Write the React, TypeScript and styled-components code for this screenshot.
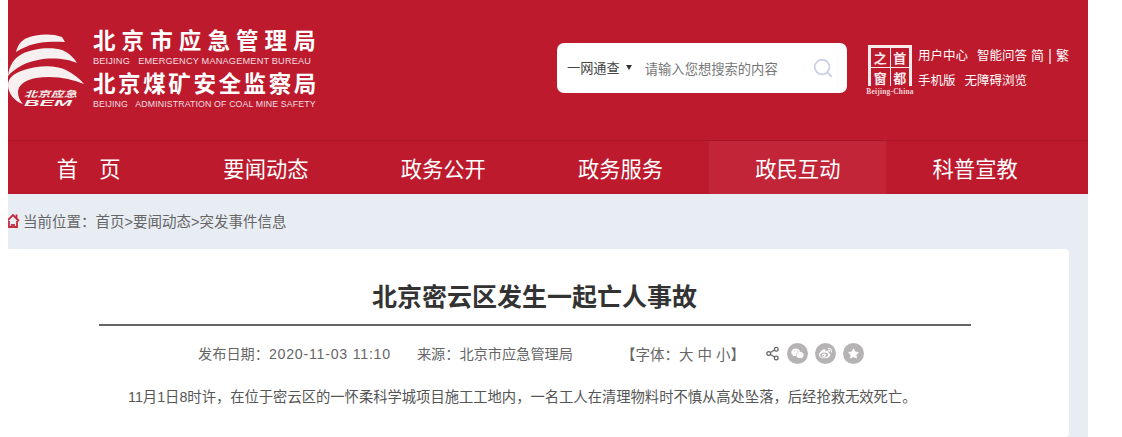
import React from 'react';
import styled, { createGlobalStyle } from 'styled-components';
import { Search, Share2 } from 'lucide-react';
import { FaWeixin, FaWeibo, FaStar } from 'react-icons/fa';

const CJK = `"Liberation Sans", "Noto Sans CJK SC", sans-serif`;

const navItems = ['首　页', '要闻动态', '政务公开', '政务服务', '政民互动', '科普宣教'];
const sealChars = ['之', '首', '窗', '都'];

// drawn in page coordinates, hence the viewBox offset
const Logo = () => (
    <svg width="86" height="88" viewBox="0 28 86 88">
        <path d="M16 52 C18 44 22 40 27 38 C36 34 52 33 62 37 L65 42 C52 41 36 42 28 46 C23 48 19 50 16 52 Z" fill="#f7f0f0"/>
        <path d="M8 76 C9 66 14 58 22 54 C34 48 52 47 62 50 C69 53 74 58 77 63 C68 59 52 57 38 60 C26 62 15 68 8 76 Z" fill="#f7f0f0"/>
        <path d="M8 85 C8 78 14 73 24 70 C36 66 54 64 66 70 C74 74 80 79 84 84 C72 79 54 75 36 78 C24 80 18 86 18 92 C18 97 20 101 23 104 C14 101 8 93 8 85 Z" fill="#f7f0f0"/>
        <LogoMark x="24" y="96.5" textLength="53" lengthAdjust="spacingAndGlyphs">北京应急</LogoMark>
        <LogoMark x="24" y="105.5" textLength="48" lengthAdjust="spacingAndGlyphs">BEM</LogoMark>
    </svg>
);

const HomeIcon = () => (
    <svg width="14" height="15" viewBox="0 0 14 15" fill="none" stroke="#c5283a" strokeWidth="1.8">
        <path d="M1 8 L7 2 L13 8"/>
        <path d="M10.5 5 V1.5"/>
        <path d="M3 8 V14 H6 V11"/>
        <path d="M8 11 V14 H11 V8"/>
    </svg>
);

export default function App() {
    return (
        <>
            <GlobalStyle/>
            <Frame>
                <Page>
                    <Header>
                        <LogoBlock>
                            <Logo/>
                            <LogoText>
                                <LogoTitle $spacing={6.1}>北京市应急管理局</LogoTitle>
                                <LogoEnglish $size={9.2} $spacing={0.18}>BEIJING&nbsp;&nbsp; EMERGENCY MANAGEMENT BUREAU</LogoEnglish>
                                <LogoTitle $spacing={2.6}>北京煤矿安全监察局</LogoTitle>
                                <LogoEnglish $size={8.8} $spacing={0.12}>BEIJING&nbsp;&nbsp; ADMINISTRATION OF COAL MINE SAFETY</LogoEnglish>
                            </LogoText>
                        </LogoBlock>
                        <SearchBox>
                            <ScopeSelect>一网通查</ScopeSelect>
                            <Caret/>
                            <Placeholder>请输入您想搜索的内容</Placeholder>
                            <Search size={22} color="#ccd1e8" strokeWidth={2}/>
                        </SearchBox>
                        <SealBlock>
                            <Seal>
                                {sealChars.map((c) => <SealChar key={c}>{c}</SealChar>)}
                            </Seal>
                            <SealCaption>Beijing-China</SealCaption>
                        </SealBlock>
                        <TopLinks>
                            <LinkRow>
                                <span>用户中心</span>
                                <span>智能问答</span>
                                <LangSwitch>简<Divider/>繁</LangSwitch>
                            </LinkRow>
                            <LinkRow>
                                <span>手机版</span>
                                <span>无障碍浏览</span>
                            </LinkRow>
                        </TopLinks>
                    </Header>
                    <Nav>
                        {navItems.map((item) => (
                            <NavItem key={item} $active={item === '政民互动'}>{item}</NavItem>
                        ))}
                    </Nav>
                    <Main>
                        <Breadcrumb>
                            <HomeIcon/>
                            当前位置：首页&gt;要闻动态&gt;突发事件信息
                        </Breadcrumb>
                        <Card>
                            <Title>北京密云区发生一起亡人事故</Title>
                            <Meta>
                                <span>发布日期：<Digits>2020-11-03 11:10</Digits></span>
                                <Source>来源：北京市应急管理局</Source>
                                <FontSwitch>【字体：大 中 小】</FontSwitch>
                                <ShareGroup>
                                    <Share2 size={15} color="#666"/>
                                    <ShareCircle><FaWeixin size={13}/></ShareCircle>
                                    <ShareCircle><FaWeibo size={13}/></ShareCircle>
                                    <ShareCircle><FaStar size={11}/></ShareCircle>
                                </ShareGroup>
                            </Meta>
                            <Paragraph>11月1日8时许，在位于密云区的一怀柔科学城项目施工工地内，一名工人在清理物料时不慎从高处坠落，后经抢救无效死亡。</Paragraph>
                        </Card>
                    </Main>
                </Page>
            </Frame>
        </>
    );
}

const GlobalStyle = createGlobalStyle`
    html, body {
        margin: 0;
        padding: 0;
        background: #fff;
        font-family: ${CJK};
    }
`;

const Frame = styled.div`
    width: 1080px;
    height: 437px;
    margin-left: 8px;
    overflow: hidden;
`;

const Page = styled.div`
    width: 1088px;
    margin-left: -8px;
`;

const Header = styled.header`
    display: flex;
    height: 140px;
    background: #bd1a2d;
    color: #fff;
`;

const LogoBlock = styled.div`
    display: flex;
    width: 557px;
    padding-top: 27px;
    box-sizing: border-box;
    align-items: flex-start;
    svg {
        flex: none;
        margin-right: 7px;
        margin-top: 1px;
        overflow: visible;
    }
`;

const LogoMark = styled.text`
    font-size: 8.5px;
    font-weight: 700;
    font-style: italic;
    fill: #f7f0f0;
`;

const LogoText = styled.div`
    display: flex;
    flex-direction: column;
    white-space: nowrap;
`;

const LogoTitle = styled.div<{ $spacing: number }>`
    font-size: 22.5px;
    line-height: 29px;
    font-weight: 700;
    letter-spacing: ${(p) => p.$spacing}px;
`;

const LogoEnglish = styled.div<{ $size: number; $spacing: number }>`
    font-size: ${(p) => p.$size}px;
    line-height: 11px;
    letter-spacing: ${(p) => p.$spacing}px;
    color: #f3dfe1;
    margin-bottom: 3px;
`;

const SearchBox = styled.div`
    display: flex;
    align-items: center;
    width: 290px;
    height: 50px;
    margin-top: 43px;
    padding: 0 13px 0 10px;
    box-sizing: border-box;
    background: #fff;
    border-radius: 7px;
`;

const ScopeSelect = styled.span`
    font-size: 13.2px;
    color: #444;
    line-height: 17px;
`;

const Caret = styled.span`
    width: 0;
    height: 0;
    margin: 0 13px 2px 6px;
    border-left: 3px solid transparent;
    border-right: 3px solid transparent;
    border-top: 5px solid #333;
`;

const Placeholder = styled.span`
    flex: 1;
    font-size: 13.3px;
    color: #777;
`;

const SealBlock = styled.div`
    display: flex;
    flex-direction: column;
    align-items: center;
    margin: 45px 0 0 18px;
    width: 50px;
`;

const Seal = styled.div`
    display: grid;
    grid-template-columns: 1fr 1fr;
    grid-template-rows: 1fr 1fr;
    gap: 1px;
    width: 44px;
    height: 41px;
    box-sizing: border-box;
    border: 3px solid #f7eaec;
    background: #f7eaec;
`;

const SealChar = styled.span`
    display: flex;
    align-items: center;
    justify-content: center;
    background: #bd1a2d;
    font-size: 13px;
    font-weight: 700;
    color: #f7eaec;
`;

const SealCaption = styled.span`
    font-family: "Liberation Serif", serif;
    font-size: 7.5px;
    font-weight: 700;
    letter-spacing: 0.2px;
    white-space: nowrap;
    margin-top: 1px;
    color: #f0d5d8;
`;

const TopLinks = styled.div`
    display: flex;
    flex-direction: column;
    gap: 7px;
    margin: 47px 0 0 2px;
    padding-left: 1px;
    font-size: 12.5px;
`;

const LinkRow = styled.div`
    display: flex;
    gap: 9px;
    line-height: 18px;
`;

const LangSwitch = styled.span`
    display: flex;
    align-items: center;
    margin-left: -5px;
    font-size: 13px;
`;

const Divider = styled.i`
    width: 2px;
    height: 15px;
    margin: 0 5px;
    background: #e3a3ab;
`;

const Nav = styled.nav`
    display: grid;
    grid-template-columns: repeat(6, 177.3px);
    height: 53px;
    border-top: 1px solid #a81728;
    background: #bd1a2d;
`;

const NavItem = styled.a<{ $active?: boolean }>`
    display: flex;
    align-items: center;
    justify-content: center;
    font-size: 21.3px;
    color: #fff;
    background: ${(p) => (p.$active ? '#c32538' : 'transparent')};
`;

const Main = styled.main`
    height: 243px;
    background: #e8edf4;
`;

const Breadcrumb = styled.div`
    display: flex;
    align-items: center;
    gap: 3px;
    height: 53px;
    padding: 0 0 2px 6px;
    font-size: 14.5px;
    color: #666;
`;

const Card = styled.section`
    width: 1069px;
    height: 188px;
    box-sizing: border-box;
    background: #fff;
    border-radius: 4px;
    padding-top: 30px;
`;

const Title = styled.h1`
    width: 872px;
    height: 45px;
    margin: 0 auto;
    border-bottom: 2px solid #666;
    text-align: center;
    font-size: 25px;
    line-height: 36px;
    font-weight: 700;
    color: #333;
`;

const Meta = styled.div`
    display: flex;
    align-items: center;
    height: 20px;
    margin-top: 17px;
    padding-left: 198px;
    font-size: 14.2px;
    color: #666;
    white-space: nowrap;
`;

const Digits = styled.span`
    letter-spacing: 0.75px;
`;

const Source = styled.span`
    margin-left: 26px;
`;

const FontSwitch = styled.span`
    margin-left: 48px;
    font-size: 14.5px;
`;

const ShareGroup = styled.div`
    display: flex;
    align-items: center;
    gap: 7px;
    margin-left: 20px;
`;

const ShareCircle = styled.i`
    display: flex;
    align-items: center;
    justify-content: center;
    width: 21px;
    height: 21px;
    border-radius: 50%;
    background: #b6b3b4;
    color: #fff;
`;

const Paragraph = styled.p`
    margin: 22px 0 0 128px;
    font-size: 14.3px;
    line-height: 24px;
    color: #555;
    white-space: nowrap;
`;
